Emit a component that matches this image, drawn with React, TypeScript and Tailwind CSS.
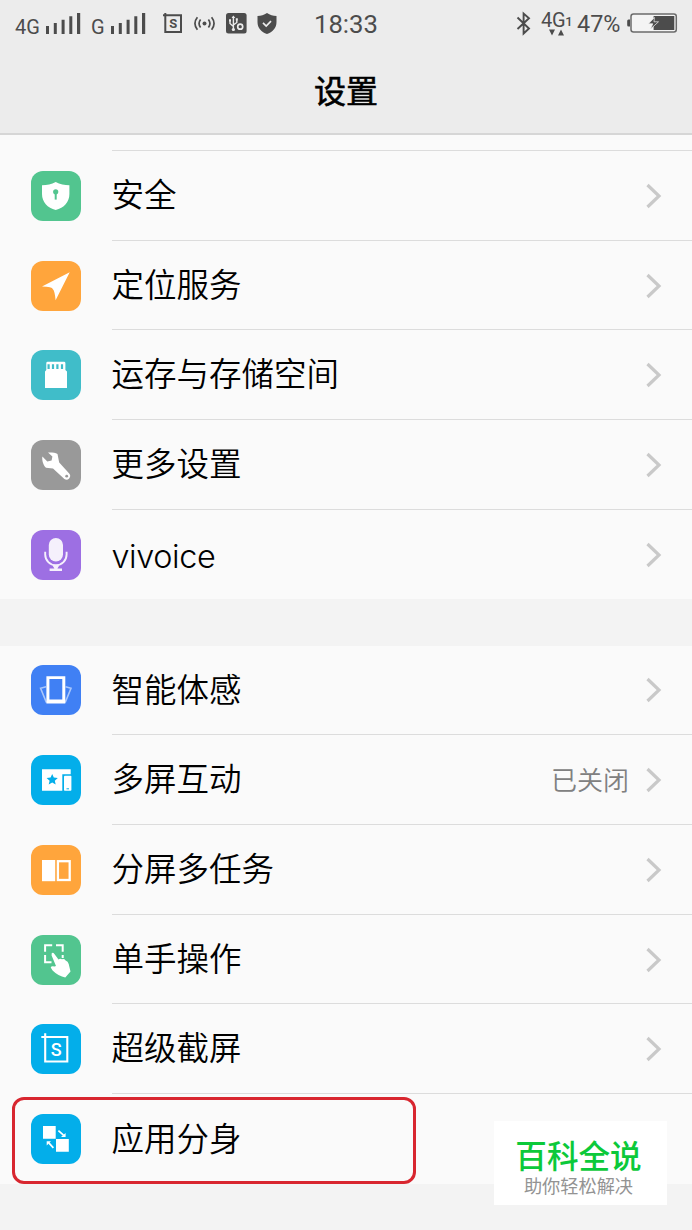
import type { ReactNode } from 'react';
import clsx from 'clsx';

type Item = {
  label: string;
  color: string;
  icon: ReactNode;
  value?: string;
  latin?: boolean;
  noArrow?: boolean;
};

const general: Item[] = [
  {
    label: '安全',
    color: 'bg-[#52c58f]',
    icon: (
      <>
        <path d="M24.7 11C20.5 13.5 16 14.2 11 14.2V23C11 31 16.5 37 24.7 39C33 37 38.4 31 38.4 23V14.2C33.5 14.2 29 13.5 24.7 11Z" fill="#fff" />
        <circle cx="24.7" cy="20.8" r="2.6" fill="#52c58f" />
        <path d="M24.7 21V28.6" stroke="#52c58f" strokeWidth="2" />
      </>
    ),
  },
  {
    label: '定位服务',
    color: 'bg-[#ffa53c]',
    icon: <path d="M38.7 11.2L11 25.6Q21.3 26 21.9 28.2Q23.8 30 24.6 39.2Z" fill="#fff" />,
  },
  {
    label: '运存与存储空间',
    color: 'bg-[#40bdc9]',
    icon: (
      <>
        <path d="M15.3 20V13.2Q15.3 11.8 16.7 11.8H33Q34.4 11.8 34.4 13.2V20L36 21.5V38H14V21.5Z" fill="#fff" />
        <path d="M17.6 14.3V19M22 14.3V19M26.4 14.3V19M31 14.3V19" stroke="#40bdc9" strokeWidth="2.2" />
      </>
    ),
  },
  {
    label: '更多设置',
    color: 'bg-[#999999]',
    icon: (
      <>
        <path d="M11.4 16.6L16.3 21.4L20.6 20.6L21.4 16.6L17 12.6C20.5 12.4 24.5 12.8 26.5 14L28.2 22.6L38.2 33.6A3.6 3.6 0 0 1 33.4 38.9L22 28.6L15 27.8C12.2 25.5 10.7 20 11.4 16.6Z" fill="#fff" />
        <circle cx="35.7" cy="36.2" r="1.4" fill="#999" />
      </>
    ),
  },
  {
    label: 'vivoice',
    color: 'bg-[#9d6fe3]',
    latin: true,
    icon: (
      <g opacity=".9">
        <rect x="17.8" y="8" width="14.2" height="23.6" rx="7.1" fill="#fff" />
        <path d="M14.2 21.8V24.5A10.7 10.7 0 0 0 35.6 24.5V21.8" fill="none" stroke="#fff" strokeWidth="1.9" />
        <path d="M21.5 35.5H28.3L26.4 38.4H31V41H18.6V38.4H23.4Z" fill="#fff" />
      </g>
    ),
  },
];

const features: Item[] = [
  {
    label: '智能体感',
    color: 'bg-[#4080f4]',
    icon: (
      <>
        <path d="M15 21.8L9.6 23.2L15.4 37.5M34.6 21.8L40 23.2L34.2 37.5" fill="none" stroke="#a9c7fb" strokeWidth="1.6" />
        <path d="M15.4 11.2H34.3V38.4H15.4ZM18.4 14V34.4H31.3V14Z" fill="#fff" fillRule="evenodd" />
      </>
    ),
  },
  {
    label: '多屏互动',
    color: 'bg-[#03aeea]',
    value: '已关闭',
    icon: (
      <>
        <path d="M11 14.2H39.7V19.3H31.3V35.8H11Z" fill="#fff" />
        <path d="M21.2 18.9L22.8 22.6L26.8 23L23.8 25.7L24.7 29.6L21.2 27.5L17.7 29.6L18.6 25.7L15.6 23L19.6 22.6Z" fill="#03aeea" />
        <rect x="33" y="20.8" width="7.4" height="15" rx=".8" fill="#fff" />
        <path d="M35.5 33.8H38" stroke="#03aeea" />
      </>
    ),
  },
  {
    label: '分屏多任务',
    color: 'bg-[#ffa53c]',
    icon: (
      <>
        <rect x="11" y="15" width="13.2" height="21.2" fill="#fff" />
        <rect x="26.9" y="16.2" width="11.8" height="18.8" fill="none" stroke="#fff" strokeWidth="2.3" />
      </>
    ),
  },
  {
    label: '单手操作',
    color: 'bg-[#52c58f]',
    icon: (
      <>
        <path d="M21.2 10.2H14.1V16.8M25 10.2H31.7V16.8M14.1 20V27.2H20.5M31.7 20V23" fill="none" stroke="#fff" strokeWidth="2" />
        <path d="M20.7 18.2Q22 17 23.4 19L27.5 24.6Q29 23.2 31 24.2Q33.4 23.6 34.6 25.4Q37 26 37.7 29L39.5 36.5L34.3 42.4Q27.5 41.5 21.6 35.6L19.7 32.6Q20.3 30.6 23.5 31.6L25 30.9L20.6 20.4Z" fill="#fff" />
      </>
    ),
  },
  {
    label: '超级截屏',
    color: 'bg-[#03aeea]',
    icon: (
      <>
        <path d="M10.3 13H36.3V37.5H14.2V9.2" fill="none" stroke="#fff" strokeWidth="2.1" />
        <text x="25.2" y="31.8" textAnchor="middle" fontSize="18" fontFamily="Roboto, sans-serif" fontWeight="500" fill="#fff">S</text>
      </>
    ),
  },
  {
    label: '应用分身',
    color: 'bg-[#03aeea]',
    noArrow: true,
    icon: (
      <>
        <path d="M12 12H24.7V24.8H12ZM25 25H37.8V37.8H25Z" fill="#fff" />
        <path d="M27.4 16.6L32.5 21.2M22.4 33.8L17.8 28.8" stroke="#fff" strokeWidth="1.7" />
        <path d="M34.6 19V23H30ZM15.7 31.4V27.2H20Z" fill="#fff" />
      </>
    ),
  },
];

function SignalBars() {
  return (
    <svg width="35" height="21" viewBox="0 0 35 21" fill="#4c4c4c">
      <path d="M0 13H3V21H0ZM7.8 10H10.8V21H7.8ZM15.6 6.7H18.6V21H15.6ZM23.3 3.3H26.3V21H23.3ZM31 0H34.2V21H31Z" />
    </svg>
  );
}

function StatusBar() {
  return (
    <div className="h-[48px] flex items-start text-[#4c4c4c] font-[Roboto,sans-serif] leading-none">
      <div className="flex items-start pt-[13px] pl-[15px] w-[314px]">
        <span className="w-[31px] pt-1 text-[20px]">4G</span>
        <SignalBars />
        <span className="w-[20px] ml-[10px] pt-1 text-[20px]">G</span>
        <SignalBars />
        <svg className="ml-[17px]" width="20" height="21" viewBox="0 0 20 21">
          <path d="M0 2.3H18V19H2.3V0" fill="none" stroke="#4c4c4c" strokeWidth="2" />
          <text x="10.3" y="15.4" textAnchor="middle" fontSize="13" fontWeight="700" fill="#4c4c4c">S</text>
        </svg>
        <svg className="ml-[11px]" width="21" height="21" viewBox="0 0 21 21" fill="none" stroke="#4c4c4c" strokeWidth="1.7">
          <circle cx="10.5" cy="10.5" r="2" fill="#4c4c4c" stroke="none" />
          <path d="M6.6 6.5Q3.5 10.5 6.6 14.5M14.4 6.5Q17.5 10.5 14.4 14.5M3.4 4.3Q-1.5 10.5 3.4 16.7M17.6 4.3Q22.5 10.5 17.6 16.7" />
        </svg>
        <svg className="ml-[11px]" width="21" height="21" viewBox="0 0 21 21" fill="none" stroke="#ececec">
          <rect width="20.6" height="20.6" rx="2.5" fill="#4c4c4c" stroke="none" />
          <path d="M7.4 3.5V17.5M4 7.5V10.5L7.4 13.5M10.8 6.5V9.5L7.4 12" strokeWidth="1.4" />
          <path d="M5.6 5L7.4 2.5L9.2 5ZM3 6.2H5V8.5H3ZM9.8 5.3H11.8V7.5H9.8Z" fill="#ececec" stroke="none" />
          <circle cx="14.2" cy="13.7" r="2.5" strokeWidth="1.7" />
          <circle cx="7.4" cy="16.5" r="1.6" fill="#ececec" stroke="none" />
        </svg>
        <svg className="ml-[10px]" width="20" height="21" viewBox="0 0 20 21">
          <path d="M10 0C7 2 4 3 .5 3V9C.5 15 4.5 19 10 21C15.5 19 19.5 15 19.5 9V3C16 3 13 2 10 0Z" fill="#4c4c4c" />
          <path d="M6 9.8L9.2 13L14 8.2" fill="none" stroke="#ececec" strokeWidth="1.7" />
        </svg>
      </div>
      <span className="w-[202px] pt-[12px] text-[25.7px]">18:33</span>
      <svg className="mt-[11px]" width="15" height="25" viewBox="0 0 15 25" fill="none" stroke="#4c4c4c" strokeWidth="1.9">
        <path d="M1.5 6.5L13 17.5L7.6 22.5V2.5L13 7.3L1.5 18" />
      </svg>
      <div className="ml-[10px] w-[36px] pt-[10px]">
        <div className="flex items-start text-[20px] tracking-[-0.3px]">
          4G
          <span className="pt-[5px] text-[13px] font-medium">1</span>
        </div>
        <svg className="ml-2 -mt-px" width="16" height="7" viewBox="0 0 16 7" fill="#4c4c4c">
          <path d="M0 .5H6L3 6.5ZM9 6.5H15L12 .5Z" />
        </svg>
      </div>
      <span className="w-[50px] pt-[13px] text-[23.4px]">47%</span>
      <svg className="mt-[13px]" width="51" height="20" viewBox="0 0 51 20">
        <path d="M3 6.5H1.5Q.2 6.5 .2 8V12Q.2 13.5 1.5 13.5H3Z" fill="#4c4c4c" />
        <rect x="4" y="1" width="45.3" height="18" rx="2.5" fill="#f4f4f4" stroke="#6b6b6b" strokeWidth="1.5" />
        <path d="M26.6 3H47.3V17H26.6Z" fill="#4c4c4c" />
        <path d="M27.4 4.5L21.5 10.8H25.8L23.5 16L31.5 8.8H27Z" fill="#4c4c4c" stroke="#f4f4f4" strokeWidth=".7" />
      </svg>
    </div>
  );
}

function Row({ item, last }: { item: Item; last: boolean }) {
  return (
    <div className="h-[89.7px] flex items-stretch pl-[31px]">
      <div className="w-[80.5px] flex items-center">
        <div className={clsx('w-[50px] h-[50px] rounded-[12px]', item.color)}>
          <svg width="50" height="50" viewBox="0 0 50 50">{item.icon}</svg>
        </div>
      </div>
      <div className={clsx('flex-1 flex items-center pr-[30px] pt-px', !last && 'border-b border-[#dcdcdc]')}>
        <span
          className={clsx(
            'flex-1 leading-none text-black',
            item.latin ? 'pt-[5px] text-[32.4px] font-[350] tracking-[-0.4px]' : 'pt-px text-[32.5px] font-[350]'
          )}
        >
          {item.label}
        </span>
        {item.value && <span className="mr-[16px] pt-px text-[26px] leading-none font-[350] text-[#808080]">{item.value}</span>}
        {!item.noArrow && (
          <svg width="17" height="26" viewBox="0 0 17 26" fill="none" stroke="#c9c9c9" strokeWidth="3.2">
            <path d="M2.5 2L14 13L2.5 24" />
          </svg>
        )}
      </div>
    </div>
  );
}

function Group({ items }: { items: Item[] }) {
  return (
    <div className="bg-[#fafafa]">
      {items.map((item, i) => (
        <Row key={item.label} item={item} last={i === items.length - 1} />
      ))}
    </div>
  );
}

export default function App() {
  return (
    <div className="relative w-[692px] h-[1230px] overflow-hidden bg-[#f3f3f3] font-[Inter,'Noto_Sans_CJK_SC',sans-serif]">
      <header className="h-[135px] bg-[#ececec] border-b-2 border-[#d6d6d6]">
        <StatusBar />
        <h1 className="h-[88px] flex items-center justify-center text-[32px] leading-none font-normal text-black [-webkit-text-stroke:0.6px_black]">设置</h1>
      </header>

      <div className="h-[16px] pl-[112px] flex bg-[#fafafa]">
        <div className="flex-1 border-b border-[#dcdcdc]" />
      </div>
      <Group items={general} />
      <div className="h-[46.2px]" />
      <Group items={features} />

      {/* highlight around the last entry */}
      <div className="absolute left-[12px] top-[1097px] w-[404px] h-[87px] rounded-[12px] border-3 border-[#d8262f]" />

      <div className="absolute left-[494px] top-[1121px] w-[173px] h-[84px] bg-white flex flex-col items-center pt-[19px] pr-[4px]">
        <span className="text-[31.6px] leading-[34px] font-medium text-[#0cc93a]">百科全说</span>
        <span className="mt-[2px] text-[18.2px] leading-[20px] text-[#939393]">助你轻松解决</span>
      </div>
    </div>
  );
}
